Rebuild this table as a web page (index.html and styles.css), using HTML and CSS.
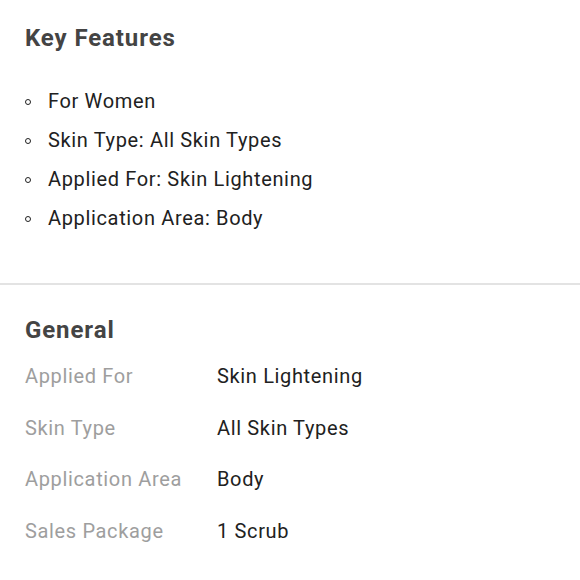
FILE: index.html
```html
<!DOCTYPE html>
<html>
<head>
<meta charset="utf-8">
<link rel="stylesheet" href="styles.css">
</head>
<body>
<section class="features">
  <h2 class="title">Key Features</h2>
  <ul class="feature-list">
    <li>For Women</li>
    <li>Skin Type: All Skin Types</li>
    <li>Applied For: Skin Lightening</li>
    <li>Application Area: Body</li>
  </ul>
</section>
<section class="general">
  <h2 class="title">General</h2>
  <div class="spec-row"><span class="spec-label">Applied For</span><span class="spec-value">Skin Lightening</span></div>
  <div class="spec-row"><span class="spec-label">Skin Type</span><span class="spec-value">All Skin Types</span></div>
  <div class="spec-row"><span class="spec-label">Application Area</span><span class="spec-value">Body</span></div>
  <div class="spec-row"><span class="spec-label">Sales Package</span><span class="spec-value">1 Scrub</span></div>
</section>
</body>
</html>
```
FILE: styles.css
```css
html, body {
  margin: 0;
  padding: 0;
  background: #ffffff;
  font-family: Roboto, "Noto Sans", sans-serif;
  color: #212121;
}
.title {
  margin: 0;
  font-size: 24px;
  line-height: 30px;
  font-weight: 700;
  color: #444444;
  letter-spacing: 0.9px;
}
.features {
  padding: 23px 25px 45px;
  border-bottom: 2px solid #e3e3e3;
}
.feature-list {
  list-style: none;
  margin: 29px 0 0;
  padding: 0;
}
.feature-list li {
  position: relative;
  font-size: 20px;
  line-height: 39px;
  letter-spacing: 0.65px;
  padding-left: 23px;
}
.feature-list li::before {
  content: "";
  position: absolute;
  left: 0;
  top: 17px;
  width: 4px;
  height: 4px;
  border: 1.5px solid #212121;
  border-radius: 50%;
}
.general {
  padding: 30px 25px 0;
}
.general .title {
  margin-bottom: 6px;
}
.spec-row {
  display: flex;
  font-size: 20px;
  line-height: 51.5px;
  letter-spacing: 0.65px;
}
.spec-label {
  width: 192px;
  color: #9e9e9e;
}
.spec-value {
  color: #212121;
}
```
